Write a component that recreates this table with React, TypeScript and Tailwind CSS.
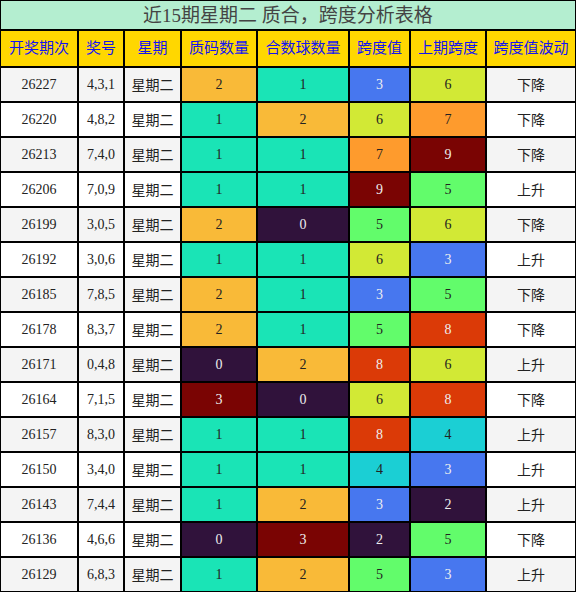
import React from "react";

const rows: [string, string, number, number, number, number, string][] = [
  ["26227", "4,3,1", 2, 1, 3, 6, "下降"],
  ["26220", "4,8,2", 1, 2, 6, 7, "下降"],
  ["26213", "7,4,0", 1, 1, 7, 9, "下降"],
  ["26206", "7,0,9", 1, 1, 9, 5, "上升"],
  ["26199", "3,0,5", 2, 0, 5, 6, "下降"],
  ["26192", "3,0,6", 1, 1, 6, 3, "上升"],
  ["26185", "7,8,5", 2, 1, 3, 5, "下降"],
  ["26178", "8,3,7", 2, 1, 5, 8, "下降"],
  ["26171", "0,4,8", 0, 2, 8, 6, "上升"],
  ["26164", "7,1,5", 3, 0, 6, 8, "下降"],
  ["26157", "8,3,0", 1, 1, 8, 4, "上升"],
  ["26150", "3,4,0", 1, 1, 4, 3, "上升"],
  ["26143", "7,4,4", 1, 2, 3, 2, "上升"],
  ["26136", "4,6,6", 0, 3, 2, 5, "下降"],
  ["26129", "6,8,3", 1, 2, 5, 3, "上升"],
];

const countCls: Record<number, string> = {
  0: "bg-[#30123b] text-[#eeeeee]",
  1: "bg-[#1ae4b6] text-[#222222]",
  2: "bg-[#f9ba38] text-[#222222]",
  3: "bg-[#7a0403] text-[#eeeeee]",
};

const spanCls: Record<number, string> = {
  2: "bg-[#30123b] text-[#eeeeee]",
  3: "bg-[#4777ef] text-[#eeeeee]",
  4: "bg-[#1bcfd4] text-[#222222]",
  5: "bg-[#62fc6b] text-[#222222]",
  6: "bg-[#d2e935] text-[#222222]",
  7: "bg-[#fe9b2d] text-[#222222]",
  8: "bg-[#db3a07] text-[#eeeeee]",
  9: "bg-[#7a0403] text-[#eeeeee]",
};

const headers = ["开奖期次", "奖号", "星期", "质码数量", "合数球数量", "跨度值", "上期跨度", "跨度值波动"];

export default function App() {
  return (
    <div
      className="w-[576px] h-[592px] bg-black p-[1px] grid gap-[2px] grid-cols-[76px_44px_55px_74px_90px_59px_74px_88px] grid-rows-[28px_35px_repeat(15,33px)] text-[14px] leading-none"
      style={{ fontFamily: '"Liberation Serif", "Noto Sans CJK SC", serif' }}
    >
      <div className="col-span-8 bg-[#b4eed0] text-[#444444] text-[19px] flex items-center justify-center">
        近15期星期二 质合，跨度分析表格
      </div>
      {headers.map((h) => (
        <div key={h} className="bg-[#ffd700] text-[#1414f0] text-[15px] flex items-center justify-center">
          {h}
        </div>
      ))}
      {rows.map((r, i) => {
        const base = i % 2 === 0 ? "bg-[#f4f4f4]" : "bg-white";
        const cell = "flex items-center justify-center";
        return (
          <React.Fragment key={r[0]}>
            <div className={`${cell} ${base} text-[#222222]`}>{r[0]}</div>
            <div className={`${cell} ${base} text-[#222222]`}>{r[1]}</div>
            <div className={`${cell} ${base} text-[#222222] pt-[2px]`}>星期二</div>
            <div className={`${cell} ${countCls[r[2]]}`}>{r[2]}</div>
            <div className={`${cell} ${countCls[r[3]]}`}>{r[3]}</div>
            <div className={`${cell} ${spanCls[r[4]]}`}>{r[4]}</div>
            <div className={`${cell} ${spanCls[r[5]]}`}>{r[5]}</div>
            <div className={`${cell} ${base} text-[#222222] pt-[2px]`}>{r[6]}</div>
          </React.Fragment>
        );
      })}
    </div>
  );
}
